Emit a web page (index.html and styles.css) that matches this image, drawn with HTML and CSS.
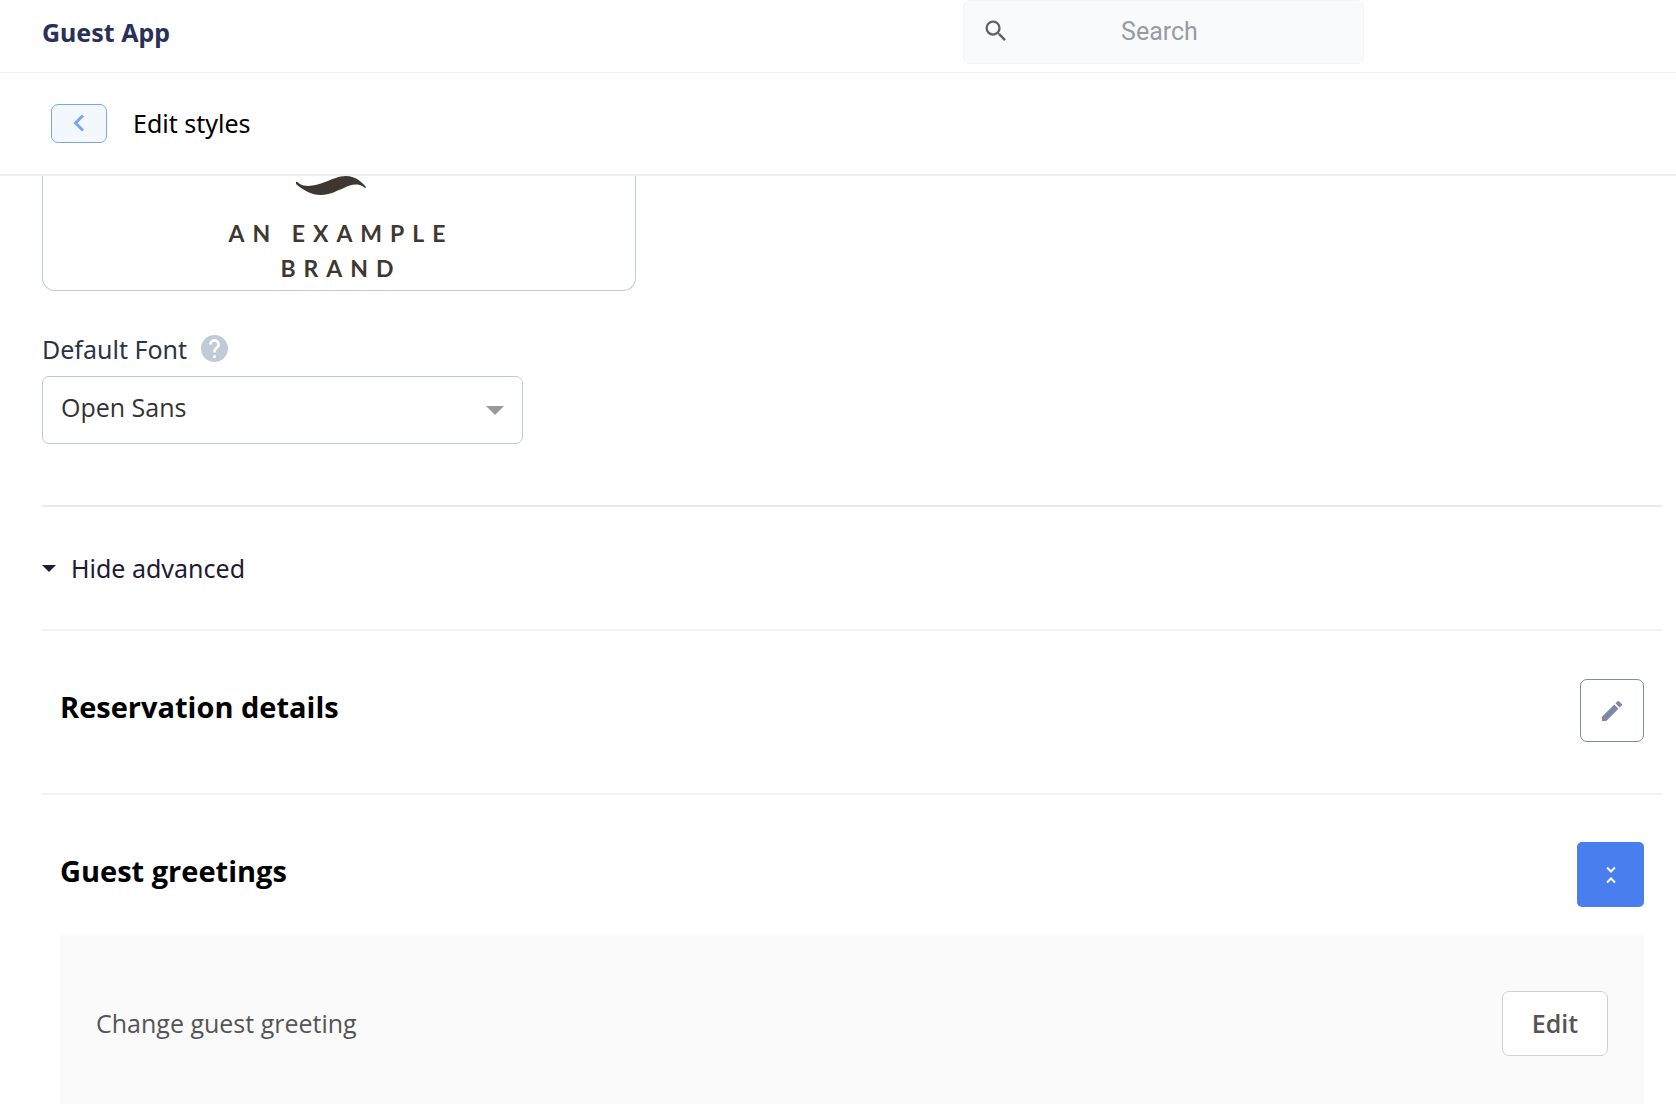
FILE: index.html
```html
<!DOCTYPE html>
<html lang="en">
<head>
<meta charset="utf-8">
<meta name="viewport" content="width=device-width, initial-scale=1">
<title>Guest App - Edit styles</title>
<link rel="stylesheet" href="styles.css">
</head>
<body>
<header class="topbar">
  <div class="topbar-title">Guest App</div>
  <label class="search">
    <svg class="search-icon" viewBox="0 0 24 24" aria-hidden="true"><path d="M15.5 14h-.79l-.28-.27A6.47 6.47 0 0 0 16 9.500 6.500 6.500 0 1 0 9.500 16c1.610 0 3.090-.59 4.230-1.570l.27.28v.79l5 4.990L20.490 19l-4.990-5zm-6 0C7.010 14 5 11.990 5 9.500S7.010 5 9.500 5 14 7.010 14 9.500 11.990 14 9.500 14z"/></svg>
    <input class="search-input" type="search" placeholder="Search" aria-label="Search">
  </label>
</header>
<nav class="subbar">
  <button class="back" type="button" aria-label="Back">
    <svg class="back-icon" viewBox="0 0 12 18" aria-hidden="true"><path d="M10 1.500 2.500 9 10 16.500"/></svg>
  </button>
  <h1 class="subbar-title">Edit styles</h1>
</nav>
<main class="content">
  <div class="logo-card">
    <svg class="logo-mark" viewBox="0 0 70 20" aria-hidden="true"><path d="M0 6C1 5 2 7 4 8 11 12 21 9 29 6 37 3 43 0 50 0 59 0 65 5 70 11 70 13 68 11 66 10 60 7 54 9 48 12 40 15 34 19 25 19 15 19 7 14 0 8z"/></svg>
    <p class="logo-text">AN EXAMPLE<br>BRAND</p>
  </div>
  <div class="field">
    <div class="field-head">
      <label class="field-label" for="font">Default Font</label>
      <svg class="help-icon" viewBox="2 2 20 20" role="img" aria-label="Help"><path d="M12 2C6.480 2 2 6.480 2 12s4.480 10 10 10 10-4.480 10-10S17.520 2 12 2zm1 17h-2v-2h2v2zm2.070-7.750-.9.920C13.450 12.900 13 13.500 13 15h-2v-.5c0-1.100.45-2.100 1.170-2.830l1.240-1.260c.37-.36.59-.86.59-1.410 0-1.100-.9-2-2-2s-2 .9-2 2H8c0-2.210 1.790-4 4-4s4 1.790 4 4c0 .88-.36 1.680-.93 2.250z"/></svg>
    </div>
    <div class="select-wrap">
      <select class="select" id="font"><option>Open Sans</option></select>
      <svg class="select-arrow" viewBox="0 0 18 9" aria-hidden="true"><path d="M0 0h18L9 9z"/></svg>
    </div>
  </div>
  <div class="advanced">
    <button class="advanced-toggle" type="button" aria-expanded="true">
      <svg class="advanced-arrow" viewBox="0 0 14 7" aria-hidden="true"><path d="M0 0h14L7 7z"/></svg>
      Hide advanced
    </button>
  </div>
  <section class="section">
    <div class="section-head">
      <h2 class="section-title">Reservation details</h2>
      <button class="edit-icon-button" type="button" aria-label="Edit reservation details">
        <svg class="pencil" viewBox="3 3 18 18" aria-hidden="true"><path d="M3 17.250V21h3.750L17.810 9.940l-3.750-3.750L3 17.250zM20.710 7.040a1 1 0 0 0 0-1.410l-2.340-2.340a1 1 0 0 0-1.410 0l-1.830 1.830 3.750 3.750 1.830-1.830z"/></svg>
      </button>
    </div>
  </section>
  <section class="section section-open">
    <div class="section-head">
      <h2 class="section-title">Guest greetings</h2>
      <button class="collapse-button" type="button" aria-label="Collapse guest greetings">
        <svg class="collapse-icon" viewBox="0 0 10 18" aria-hidden="true"><path d="M1 1.500 5 5.500 9 1.500M1 16.500 5 12.500 9 16.500"/></svg>
      </button>
    </div>
    <div class="panel">
      <span class="panel-text">Change guest greeting</span>
      <button class="edit-button" type="button">Edit</button>
    </div>
  </section>
</main>
</body>
</html>
```
FILE: styles.css
```css
* { box-sizing: border-box; }

body {
  margin: 0;
  min-height: 100vh;
  display: flex;
  flex-direction: column;
  background: #fff;
  color: #000;
  font-family: "Open Sans", "Noto Sans", sans-serif;
  font-size: 25px;
  line-height: 36px;
}

button, input, select { font: inherit; }
button { padding: 0; cursor: pointer; }
h1, h2, p { margin: 0; }

.topbar {
  display: grid;
  grid-template-columns: 1fr 401px 312px;
  align-items: start;
  height: 73px;
  border-bottom: 1px solid #eee;
}
.topbar-title {
  padding: 14px 0 0 42px;
  font-family: "Noto Sans", sans-serif;
  font-weight: 700;
  color: #2a3158;
}

.search {
  display: flex;
  align-items: center;
  height: 64px;
  padding: 0 18px 2px;
  border: 1px solid #f3f5f8;
  border-radius: 7px;
  background: #f8fafc;
}
.search-icon { width: 28px; height: 28px; fill: #5f6368; }
.search-input {
  flex: 1;
  min-width: 0;
  padding: 2px 15px 0 0;
  border: 0;
  outline: 0;
  background: transparent;
  font-family: Roboto, sans-serif;
  text-align: center;
}
.search-input::placeholder { color: #959ca5; opacity: 1; }

.subbar {
  display: flex;
  align-items: center;
  gap: 26px;
  height: 103px;
  padding-left: 51px;
  border-bottom: 2px solid #eee;
}
.back {
  display: grid;
  place-items: center;
  width: 56px;
  height: 39px;
  padding-bottom: 2px;
  border: 1px solid #7ba4f5;
  border-radius: 7px;
  background: #f3f7fe;
}
.back-icon {
  width: 12px;
  height: 18px;
  fill: none;
  stroke: #7ba4f5;
  stroke-width: 3;
}
.subbar-title {
  padding-bottom: 2px;
  font-family: "Noto Sans", sans-serif;
  font-size: 25px;
  font-weight: 400;
}

.content {
  flex: 1;
  display: flex;
  flex-direction: column;
  padding: 0 14px 0 42px;
}

.logo-card {
  display: flex;
  flex-direction: column;
  align-items: center;
  gap: 20px;
  width: 594px;
  height: 115px;
  border: 1px solid #c0cad9;
  border-top: 0;
  border-radius: 0 0 13px 13px;
  color: #3f3832;
}
.logo-mark { width: 70px; height: 20px; margin-right: 16px; fill: currentColor; }
.logo-text {
  padding-left: 4px;
  font-family: Lato, sans-serif;
  font-size: 23px;
  font-weight: 700;
  line-height: 35px;
  letter-spacing: 8px;
  text-align: center;
}

.field { padding: 40px 0 61px; }
.field-head {
  display: flex;
  align-items: center;
  gap: 14px;
  height: 36px;
  margin-bottom: 9px;
}
.field-label {
  font-family: "Noto Sans", sans-serif;
  color: #2b3445;
}
.help-icon { width: 27px; height: 27px; margin-bottom: 2px; fill: #c1cbd8; }
.select-wrap {
  display: grid;
  align-items: center;
  width: 481px;
}
.select {
  grid-area: 1 / 1;
  width: 100%;
  height: 68px;
  padding: 0 50px 6px 18px;
  appearance: none;
  border: 1px solid #c0cad9;
  border-radius: 7px;
  background: #fff;
  color: #333;
}
.select-arrow {
  grid-area: 1 / 1;
  justify-self: end;
  width: 18px;
  height: 9px;
  margin-right: 19px;
  fill: #999;
  pointer-events: none;
}

.advanced {
  padding: 43px 0;
  border-top: 2px solid #e8eaeb;
}
.advanced-toggle {
  display: flex;
  align-items: center;
  gap: 15px;
  border: 0;
  background: none;
  font-family: "Noto Sans", sans-serif;
  color: #221a35;
}
.advanced-arrow { width: 14px; height: 7px; fill: currentColor; }

.section {
  padding: 48px 18px 51px;
  border-top: 2px solid #f0f0f6;
}
.section-open {
  flex: 1;
  display: flex;
  flex-direction: column;
  padding-top: 47px;
  padding-bottom: 0;
}
.section-head {
  display: flex;
  align-items: center;
  justify-content: space-between;
}
.section-title {
  padding-bottom: 8px;
  font-size: 29px;
  font-weight: 700;
}
.edit-icon-button,
.collapse-button {
  display: grid;
  place-items: center;
}
.edit-icon-button {
  width: 64px;
  height: 63px;
  border: 1px solid #8088a9;
  border-radius: 7px;
  background: #fff;
}
.pencil { width: 20px; height: 20px; fill: #8088a9; }
.collapse-button {
  width: 67px;
  height: 65px;
  border: 0;
  border-radius: 5px;
  background: #487eee;
}
.collapse-icon {
  width: 10px;
  height: 18px;
  fill: none;
  stroke: #fff;
  stroke-width: 2;
}

.panel {
  flex: 1;
  display: flex;
  align-items: flex-start;
  justify-content: space-between;
  margin-top: 28px;
  padding: 56px 36px 48px;
  background: #fafafa;
}
.panel-text {
  line-height: 65px;
  color: #555;
}
.edit-button {
  width: 106px;
  height: 65px;
  padding-bottom: 2px;
  border: 1px solid #d0d0d0;
  border-radius: 7px;
  background: #fff;
  font-weight: 600;
  color: #555;
}
```
